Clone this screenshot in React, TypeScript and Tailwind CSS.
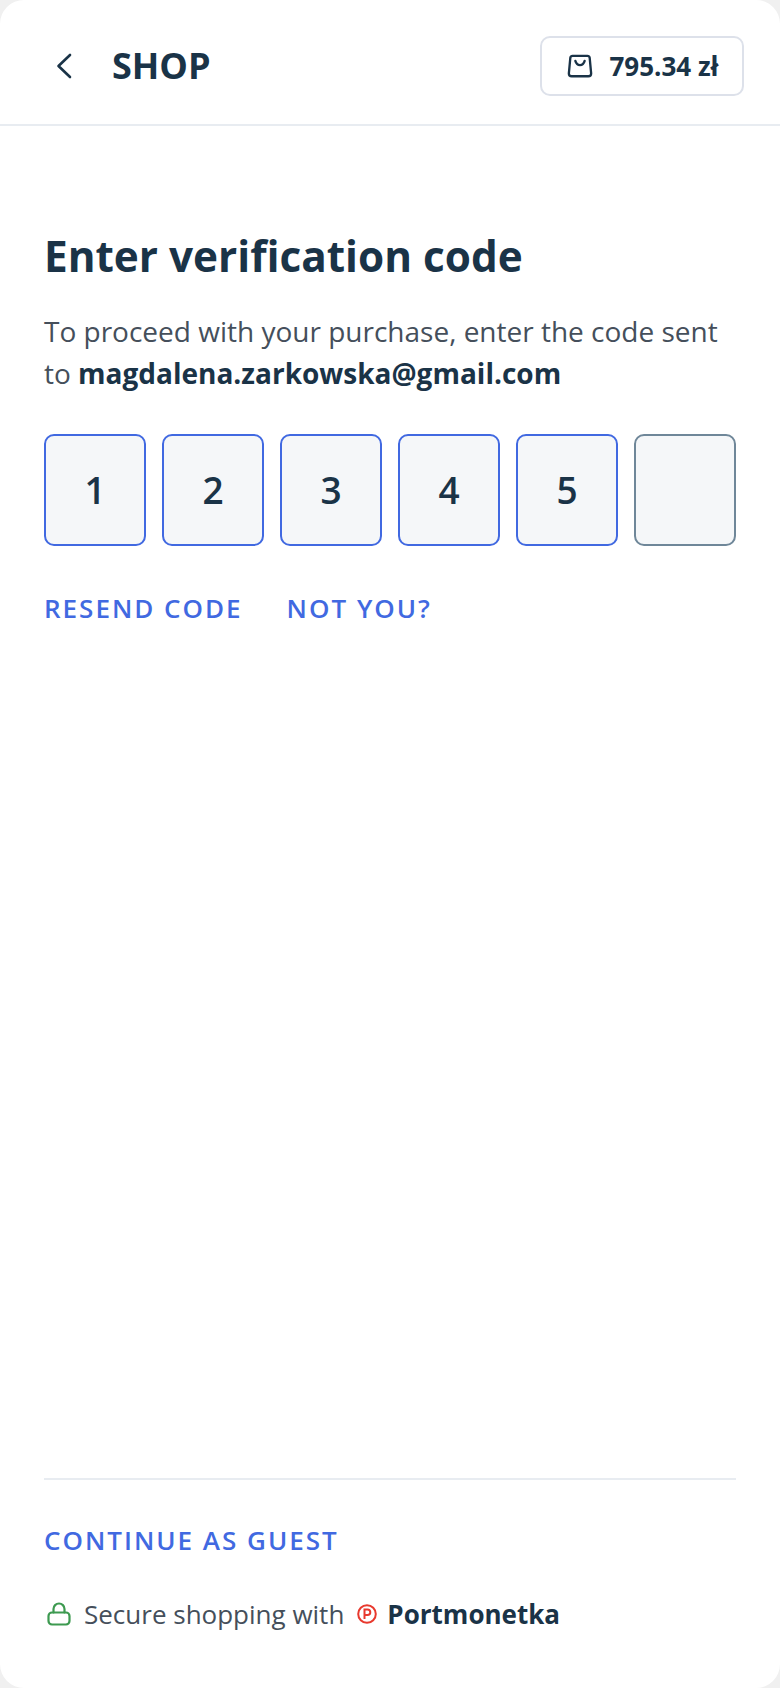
const digits = ['1', '2', '3', '4', '5', '']

const CodeBox = ({ value }: { value: string }) => (
  <div
    className={`flex h-[112px] w-[102px] items-center justify-center rounded-[10px] border-2 bg-[#f5f7f9] text-[37px] font-semibold text-[#1a3347] ${
      value ? 'border-[#4169e1]' : 'border-[#6f8799]'
    }`}
  >
    {value}
  </div>
)

export default function App() {
  return (
    <div className="h-[1688px] w-[780px] bg-[#f0f0f0] font-['Open_Sans',sans-serif]">
      <div className="flex h-full flex-col rounded-[24px] bg-white">
        <header className="flex h-[126px] items-center justify-between border-b-2 border-[#e8ecf1] pl-[56px] pr-9 pt-2">
          <div className="flex items-center gap-[40px]">
            <svg width="16" height="26" viewBox="0 0 16 26" fill="none" stroke="#1a3347" strokeWidth="2.6" strokeLinecap="round" strokeLinejoin="round">
              <path d="M14 2 2.500 13 14 24" />
            </svg>
            <span className="text-[36px] font-bold leading-none text-[#1a3347]">SHOP</span>
          </div>
          <div className="flex h-[60px] w-[204px] items-center justify-center gap-[16px] rounded-[10px] border-2 border-[#dde1ea] pl-[2px]">
            <svg width="26" height="26" viewBox="0 0 28 28" fill="none" stroke="#1a3347" strokeWidth="2.500" strokeLinecap="round" strokeLinejoin="round">
              <path d="M6 3h16a2.500 2.500 0 0 1 2.400 2l1.600 17a3 3 0 0 1-3 3H5a3 3 0 0 1-3-3L3.600 5A2.500 2.500 0 0 1 6 3z" />
              <path d="M9 8.500c1 3.500 3 4.500 5 4.500s4-1 5-4.500" />
            </svg>
            <span className="text-[26px] font-bold text-[#1a3347]">795.34 zł</span>
          </div>
        </header>

        <main className="flex flex-1 flex-col px-[44px]">
          <h1 className="mt-[103px] text-[42.300px] font-bold leading-[54px] text-[#1a3347]">Enter verification code</h1>
          <p className="mt-[27px] text-[28px] leading-[42px] text-[#454f5b]">
            To proceed with your purchase, enter the code sent to{' '}
            <span className="font-bold text-[#1a3347]">magdalena.zarkowska@gmail.com</span>
          </p>
          <div className="mt-[40px] flex gap-4">
            {digits.map((d, i) => (
              <CodeBox key={i} value={d} />
            ))}
          </div>
          <div className="mt-[46px] flex gap-[44px] text-[26px] font-semibold leading-8 tracking-[2px] text-[#4169e1]">
            <span>RESEND CODE</span>
            <span>NOT YOU?</span>
          </div>

          <div className="mt-auto border-t-2 border-[#e8ecf1] pt-[44px]">
            <div className="text-[26px] font-semibold leading-8 tracking-[2px] text-[#4169e1]">CONTINUE AS GUEST</div>
            <div className="mt-[40px] mb-[56px] flex items-center text-[26px] leading-9 text-[#454f5b]">
              <svg width="24" height="24" viewBox="0 0 24 24" fill="none" stroke="#3d9a50" strokeWidth="2.200" strokeLinecap="round" className="ml-[3px] mr-[13px]">
                <rect x="1.500" y="10.500" width="21" height="12" rx="3.500" />
                <path d="M6.500 10.500V7a5.500 5.500 0 0 1 11 0v3.500" />
              </svg>
              <span>Secure shopping with</span>
              <svg width="20" height="20" viewBox="0 0 20 20" fill="none" stroke="#e8392e" strokeWidth="2" className="ml-[13px] mr-[10px]">
                <circle cx="10" cy="10" r="8.800" />
                <path d="M7.500 15V5.500h3a2.800 2.800 0 0 1 0 5.600h-3" />
              </svg>
              <span className="font-bold text-[#1a3347]">Portmonetka</span>
            </div>
          </div>
        </main>
      </div>
    </div>
  )
}
